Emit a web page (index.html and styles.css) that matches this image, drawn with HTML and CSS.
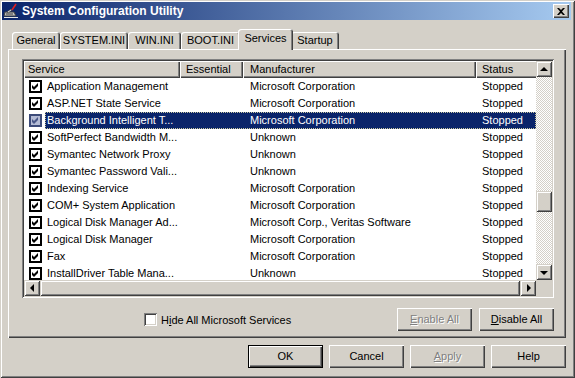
FILE: index.html
```html
<!DOCTYPE html>
<html lang="en">
<head>
<meta charset="UTF-8">
<title>System Configuration Utility</title>
<link rel="stylesheet" href="styles.css">
</head>
<body>

<div class="window">
  <div class="titlebar">
    <svg class="appicon" viewBox="0 0 16 16">
      <path d="M2 9h9l2 4H1z" fill="#c0c0c0" stroke="#404040" stroke-width="1"/>
      <rect x="3" y="10" width="7" height="2" fill="#808080"/>
      <path d="M4 9l4-3 1 1-4 3z" fill="#fff" stroke="#202020" stroke-width=".6"/>
      <path d="M9 7l4-6" stroke="#e02020" stroke-width="1.6"/>
      <path d="M1 14h14v1H1z" fill="#e8e8e8"/>
    </svg>
    <span class="title">System Configuration Utility</span>
    <div class="close">
      <svg width="8" height="7" viewBox="0 0 8 7"><path d="M0 0h2l2 2 2-2h2L5 3.5 8 7H6L4 5 2 7H0l3-3.5z" fill="#000"/></svg>
    </div>
  </div>

  <div class="tabs">
    <div class="tab w-gen">General</div>
    <div class="tab w-sys">SYSTEM.INI</div>
    <div class="tab w-win">WIN.INI</div>
    <div class="tab w-boot">BOOT.INI</div>
    <div class="tab tab-on">Services</div>
    <div class="tab w-start">Startup</div>
  </div>

  <div class="panel">
    <div class="listview">
      <div class="lv-body">
        <div class="lv-head">
          <div class="hc c-svc">Service</div>
          <div class="hc c-ess">Essential</div>
          <div class="hc c-man">Manufacturer</div>
          <div class="hc c-st">Status</div>
        </div>

        <div class="row"><div class="ck"><svg class="cb" viewBox="0 0 13 13"><rect x="1" y="1" width="11" height="11" fill="#fff" stroke="#000" stroke-width="2"/><path d="M3 5l2 2 4-4v3l-4 4-2-2z" fill="#000"/></svg></div><div class="data"><div class="c-name">Application Management</div><div class="c-ess"></div><div class="c-man">Microsoft Corporation</div><div class="c-st">Stopped</div></div></div>
        <div class="row"><div class="ck"><svg class="cb" viewBox="0 0 13 13"><rect x="1" y="1" width="11" height="11" fill="#fff" stroke="#000" stroke-width="2"/><path d="M3 5l2 2 4-4v3l-4 4-2-2z" fill="#000"/></svg></div><div class="data"><div class="c-name">ASP.NET State Service</div><div class="c-ess"></div><div class="c-man">Microsoft Corporation</div><div class="c-st">Stopped</div></div></div>
        <div class="row row-sel"><div class="ck"><svg class="cb" viewBox="0 0 13 13"><rect x="1" y="1" width="11" height="11" fill="#b4bbd4" stroke="#3c4a78" stroke-width="2"/><path d="M3 5l2 2 4-4v3l-4 4-2-2z" fill="#4a5888"/></svg></div><div class="data"><div class="c-name">Background Intelligent T...</div><div class="c-ess"></div><div class="c-man">Microsoft Corporation</div><div class="c-st">Stopped</div></div></div>
        <div class="row"><div class="ck"><svg class="cb" viewBox="0 0 13 13"><rect x="1" y="1" width="11" height="11" fill="#fff" stroke="#000" stroke-width="2"/><path d="M3 5l2 2 4-4v3l-4 4-2-2z" fill="#000"/></svg></div><div class="data"><div class="c-name">SoftPerfect Bandwidth M...</div><div class="c-ess"></div><div class="c-man">Unknown</div><div class="c-st">Stopped</div></div></div>
        <div class="row"><div class="ck"><svg class="cb" viewBox="0 0 13 13"><rect x="1" y="1" width="11" height="11" fill="#fff" stroke="#000" stroke-width="2"/><path d="M3 5l2 2 4-4v3l-4 4-2-2z" fill="#000"/></svg></div><div class="data"><div class="c-name">Symantec Network Proxy</div><div class="c-ess"></div><div class="c-man">Unknown</div><div class="c-st">Stopped</div></div></div>
        <div class="row"><div class="ck"><svg class="cb" viewBox="0 0 13 13"><rect x="1" y="1" width="11" height="11" fill="#fff" stroke="#000" stroke-width="2"/><path d="M3 5l2 2 4-4v3l-4 4-2-2z" fill="#000"/></svg></div><div class="data"><div class="c-name">Symantec Password Vali...</div><div class="c-ess"></div><div class="c-man">Unknown</div><div class="c-st">Stopped</div></div></div>
        <div class="row"><div class="ck"><svg class="cb" viewBox="0 0 13 13"><rect x="1" y="1" width="11" height="11" fill="#fff" stroke="#000" stroke-width="2"/><path d="M3 5l2 2 4-4v3l-4 4-2-2z" fill="#000"/></svg></div><div class="data"><div class="c-name">Indexing Service</div><div class="c-ess"></div><div class="c-man">Microsoft Corporation</div><div class="c-st">Stopped</div></div></div>
        <div class="row"><div class="ck"><svg class="cb" viewBox="0 0 13 13"><rect x="1" y="1" width="11" height="11" fill="#fff" stroke="#000" stroke-width="2"/><path d="M3 5l2 2 4-4v3l-4 4-2-2z" fill="#000"/></svg></div><div class="data"><div class="c-name">COM+ System Application</div><div class="c-ess"></div><div class="c-man">Microsoft Corporation</div><div class="c-st">Stopped</div></div></div>
        <div class="row"><div class="ck"><svg class="cb" viewBox="0 0 13 13"><rect x="1" y="1" width="11" height="11" fill="#fff" stroke="#000" stroke-width="2"/><path d="M3 5l2 2 4-4v3l-4 4-2-2z" fill="#000"/></svg></div><div class="data"><div class="c-name">Logical Disk Manager Ad...</div><div class="c-ess"></div><div class="c-man">Microsoft Corp., Veritas Software</div><div class="c-st">Stopped</div></div></div>
        <div class="row"><div class="ck"><svg class="cb" viewBox="0 0 13 13"><rect x="1" y="1" width="11" height="11" fill="#fff" stroke="#000" stroke-width="2"/><path d="M3 5l2 2 4-4v3l-4 4-2-2z" fill="#000"/></svg></div><div class="data"><div class="c-name">Logical Disk Manager</div><div class="c-ess"></div><div class="c-man">Microsoft Corporation</div><div class="c-st">Stopped</div></div></div>
        <div class="row"><div class="ck"><svg class="cb" viewBox="0 0 13 13"><rect x="1" y="1" width="11" height="11" fill="#fff" stroke="#000" stroke-width="2"/><path d="M3 5l2 2 4-4v3l-4 4-2-2z" fill="#000"/></svg></div><div class="data"><div class="c-name">Fax</div><div class="c-ess"></div><div class="c-man">Microsoft Corporation</div><div class="c-st">Stopped</div></div></div>
        <div class="row"><div class="ck"><svg class="cb" viewBox="0 0 13 13"><rect x="1" y="1" width="11" height="11" fill="#fff" stroke="#000" stroke-width="2"/><path d="M3 5l2 2 4-4v3l-4 4-2-2z" fill="#000"/></svg></div><div class="data"><div class="c-name">InstallDriver Table Mana...</div><div class="c-ess"></div><div class="c-man">Unknown</div><div class="c-st">Stopped</div></div></div>
      </div>

      <div class="vscroll">
        <div class="sbtn"><span class="arr-up"></span></div>
        <div class="track"><div class="thumb"></div></div>
        <div class="sbtn"><span class="arr-down"></span></div>
      </div>
      <div class="hscroll">
        <div class="sbtn"><span class="arr-left"></span></div>
        <div class="hthumb"></div>
        <div class="sbtn"><span class="arr-right"></span></div>
      </div>
      <div class="corner"></div>
    </div>

    <div class="panel-foot">
      <div class="hide">
        <span class="box"></span>
        <span>H<u>i</u>de All Microsoft Services</span>
      </div>
      <div class="btn dis"><u>E</u>nable All</div>
      <div class="btn"><u>D</u>isable All</div>
    </div>
  </div>

  <div class="buttons">
    <div class="btn default">OK</div>
    <div class="btn">Cancel</div>
    <div class="btn dis"><u>A</u>pply</div>
    <div class="btn">Help</div>
  </div>
</div>

</body>
</html>
```

FILE: styles.css
```css
html,body{margin:0;background:#d4d0c8}
body{font-family:"Liberation Sans",Arial,sans-serif;font-size:11px;color:#000}

.window{width:575px;height:378px;box-sizing:border-box;padding:2px 4px 4px 2px;display:flex;flex-direction:column;background:#d4d0c8;
  box-shadow:inset 1px 1px #d4d0c8,inset -1px -1px #404040,inset 2px 2px #fff,inset -2px -2px #808080}

/* title bar */
.titlebar{height:18px;flex:none;display:flex;align-items:center;background:linear-gradient(to right,#0a246a,#a6caf0);color:#fff;font-weight:bold;font-size:12px}
.appicon{width:16px;height:16px;margin:0 3px 0 1px}
.title{flex:1}
.close{width:16px;height:14px;margin-right:2px;box-sizing:border-box;padding-top:1px;background:#d4d0c8;display:flex;align-items:center;justify-content:center;
  box-shadow:inset 1px 1px #fff,inset -1px -1px #404040,inset -2px -2px #808080}

/* tabs */
.tabs{height:29px;flex:none;display:flex;align-items:flex-end;padding-left:10px}
.tab{height:17px;line-height:17px;text-align:center;background:#d4d0c8;border-radius:3px 3px 0 0;
  box-shadow:inset 1px 1px #fff,inset -1px 0 #404040,inset -2px 0 #808080}
.w-gen{width:48px}
.w-sys{width:68px}
.w-win{width:53px}
.w-boot{width:59px}
.w-start{width:48px}
.tab-on{width:55px;height:21px;line-height:18px;margin:0 -2px -1px;position:relative;z-index:2}

/* tab page */
.panel{height:289px;flex:none;margin:0 5px 0 6px;box-sizing:border-box;padding:10px 12px 7px 14px;position:relative;z-index:1;
  display:flex;flex-direction:column;
  box-shadow:inset 1px 1px #fff,inset -1px -1px #404040,inset -2px -2px #808080}

/* list view */
.listview{height:239px;box-sizing:border-box;padding:2px;background:#fff;display:grid;grid-template-columns:512px 16px;grid-template-rows:219px 16px;
  box-shadow:inset 1px 1px #808080,inset -1px -1px #fff,inset 2px 2px #404040,inset -2px -2px #d4d0c8}
.lv-body{overflow:hidden;background:#fff}
.lv-head{display:flex;height:17px;background:#d4d0c8;white-space:nowrap}
.hc{flex:none;box-sizing:border-box;line-height:17px;padding-left:6px;
  box-shadow:inset 1px 1px #fff,inset -1px -1px #404040,inset -2px -2px #808080}
.lv-head .c-svc{width:156px;padding-left:4px}
.c-ess{width:63px;flex:none}
.c-man{width:233px;flex:none;padding-left:7px;box-sizing:border-box}
.c-st{width:90px;flex:none;padding-left:6px;box-sizing:border-box}
.data .c-st{width:60px}

.row{display:flex;height:17px;line-height:17px;white-space:nowrap}
.ck{width:21px;flex:none;display:flex;align-items:center;padding-left:5px;box-sizing:border-box}
.cb{width:13px;height:13px;display:block}
.data{display:flex;width:491px}
.c-name{width:135px;flex:none;padding-left:2px;box-sizing:border-box}
.row-sel .data{background:#0a246a;color:#fff;outline:1px dotted #c8c8a0;outline-offset:-1px}

/* scroll bars */
.vscroll{display:flex;flex-direction:column}
.hscroll{display:flex}
.sbtn{width:16px;height:16px;flex:none;box-sizing:border-box;background:#d4d0c8;display:flex;align-items:center;justify-content:center;
  box-shadow:inset 1px 1px #d4d0c8,inset -1px -1px #404040,inset 2px 2px #fff,inset -2px -2px #808080}
.track{flex:1;background-color:#fff;background-image:repeating-conic-gradient(#d4d0c8 0 25%,#fff 0 50%);background-size:2px 2px}
.thumb{height:21px;margin-top:114px;background:#d4d0c8;
  box-shadow:inset 1px 1px #d4d0c8,inset -1px -1px #404040,inset 2px 2px #fff,inset -2px -2px #808080}
.hthumb{flex:1;background:#d4d0c8;
  box-shadow:inset 1px 1px #d4d0c8,inset -1px -1px #404040,inset 2px 2px #fff,inset -2px -2px #808080}
.corner{background:#d4d0c8}
.arr-up{border:4px solid transparent;border-top:0;border-bottom-color:#000;margin-top:-1px}
.arr-down{border:4px solid transparent;border-bottom:0;border-top-color:#000;margin-top:1px}
.arr-left{border:4px solid transparent;border-left:0;border-right-color:#000}
.arr-right{border:4px solid transparent;border-right:0;border-left-color:#000;margin-left:1px}

/* bottom of tab page */
.panel-foot{display:flex;align-items:center;margin-top:10px;height:23px}
.hide{display:flex;align-items:center;gap:4px;margin-left:122px;flex:1}
.box{width:13px;height:13px;box-sizing:border-box;background:#fff;
  box-shadow:inset 1px 1px #808080,inset -1px -1px #fff,inset 2px 2px #404040,inset -2px -2px #d4d0c8}
.panel-foot .btn + .btn{margin-left:7px}

/* push buttons */
.btn{width:75px;height:23px;box-sizing:border-box;line-height:23px;text-align:center;background:#d4d0c8;
  box-shadow:inset 1px 1px #fff,inset -1px -1px #404040,inset -2px -2px #808080}
.btn.default{line-height:21px;border:1px solid #000}
.btn.dis{color:#808080;text-shadow:1px 1px #fff}
.buttons{display:flex;justify-content:flex-end;gap:6px;margin:7px 5px 0 0}
```
